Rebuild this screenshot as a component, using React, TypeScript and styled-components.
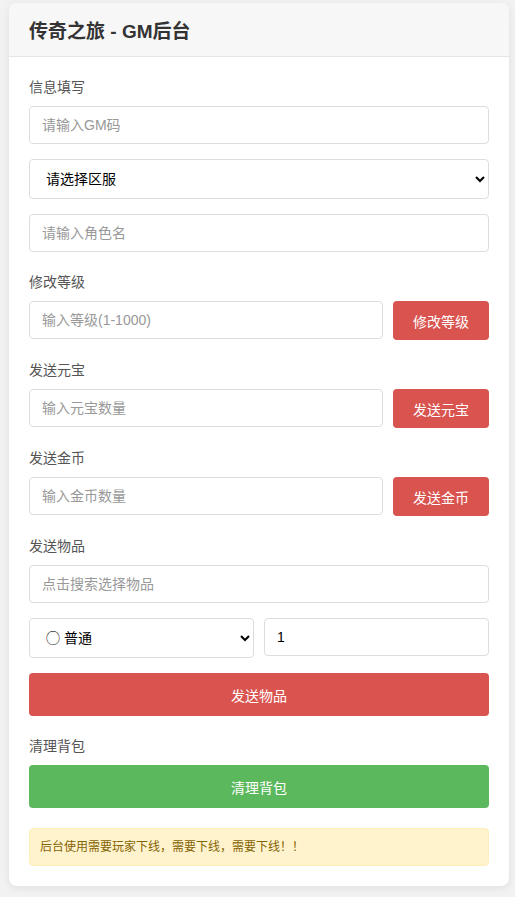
import React, { useState } from 'react'
import styled, { createGlobalStyle } from 'styled-components'

const GlobalStyle = createGlobalStyle`
  html, body {
    margin: 0;
    padding: 0;
    background: #f2f2f2;
    font-family: "Liberation Sans", "Noto Sans CJK SC", sans-serif;
  }
  * { box-sizing: border-box; }
`

const App = () => {
  const [gmCode, setGmCode] = useState('')
  const [server, setServer] = useState('')
  const [role, setRole] = useState('')
  const [level, setLevel] = useState('')
  const [ingot, setIngot] = useState('')
  const [gold, setGold] = useState('')
  const [item, setItem] = useState('')
  const [quality, setQuality] = useState('normal')
  const [count, setCount] = useState('1')

  return (
    <>
      <GlobalStyle />
      <Page>
        <Card>
          <CardHeader>
            <Title>传奇之旅 - GM后台</Title>
          </CardHeader>
          <CardBody>
            <Group>
              <Label>信息填写</Label>
              <Stack>
                <Input placeholder="请输入GM码" value={gmCode} onChange={(e: any) => setGmCode(e.target.value)} />
                <Select value={server} onChange={(e: any) => setServer(e.target.value)}>
                  <option value="">请选择区服</option>
                </Select>
                <Input placeholder="请输入角色名" value={role} onChange={(e: any) => setRole(e.target.value)} />
              </Stack>
            </Group>

            <Group>
              <Label>修改等级</Label>
              <ActionRow>
                <Input placeholder="输入等级(1-1000)" value={level} onChange={(e: any) => setLevel(e.target.value)} />
                <Button $tone="red">修改等级</Button>
              </ActionRow>
            </Group>

            <Group>
              <Label>发送元宝</Label>
              <ActionRow>
                <Input placeholder="输入元宝数量" value={ingot} onChange={(e: any) => setIngot(e.target.value)} />
                <Button $tone="red">发送元宝</Button>
              </ActionRow>
            </Group>

            <Group>
              <Label>发送金币</Label>
              <ActionRow>
                <Input placeholder="输入金币数量" value={gold} onChange={(e: any) => setGold(e.target.value)} />
                <Button $tone="red">发送金币</Button>
              </ActionRow>
            </Group>

            <Group>
              <Label>发送物品</Label>
              <Stack>
                <Input placeholder="点击搜索选择物品" value={item} onChange={(e: any) => setItem(e.target.value)} />
                <SplitRow>
                  <Select value={quality} onChange={(e: any) => setQuality(e.target.value)}>
                    <option value="normal">◯ 普通</option>
                  </Select>
                  <Input value={count} onChange={(e: any) => setCount(e.target.value)} />
                </SplitRow>
                <Button $tone="red" $block>发送物品</Button>
              </Stack>
            </Group>

            <Group>
              <Label>清理背包</Label>
              <Button $tone="green" $block>清理背包</Button>
            </Group>

            <Notice>后台使用需要玩家下线，需要下线，需要下线！！</Notice>
          </CardBody>
        </Card>
      </Page>
    </>
  )
}

let Page: any = styled.div`
  padding: 3px 6px 11px 9px;
`
let Card: any = styled.div`
  background: #ffffff;
  border-radius: 8px;
  box-shadow: 0 2px 8px rgba(0, 0, 0, 0.08);
  overflow: hidden;
`
let CardHeader: any = styled.div`
  background: #f7f7f7;
  border-bottom: 1px solid #e5e5e5;
  height: 54px;
  padding: 0 20px;
  display: flex;
  align-items: center;
`
let Title: any = styled.h1`
  margin: 0;
  font-size: 19px;
  font-weight: 700;
  color: #333;
`
let CardBody: any = styled.div`
  padding: 20px;
`
let Group: any = styled.div`
  margin-bottom: 20px;
`
let Label: any = styled.div`
  height: 20px;
  line-height: 20px;
  font-size: 14px;
  color: #555;
  margin-bottom: 9px;
`
let Stack: any = styled.div`
  display: flex;
  flex-direction: column;
  gap: 15px;
`
let Input: any = styled.input`
  display: block;
  min-width: 0;
  width: 100%;
  height: 38px;
  padding: 0 12px;
  border: 1px solid #dddddd;
  border-radius: 4px;
  font-size: 14px;
  font-family: inherit;
  color: #000;
  outline: none;
  &::placeholder { color: #999; }
`
let ActionRow: any = styled.div`
  display: flex;
  align-items: flex-start;
  gap: 10px;
  & > ${Input} { flex: 1; }
`
let SplitRow: any = styled.div`
  display: grid;
  grid-template-columns: 1fr 1fr;
  gap: 10px;
  align-items: start;
`
let Select: any = styled.select`
  display: block;
  width: 100%;
  height: 40px;
  padding: 0 12px;
  border: 1px solid #dddddd;
  border-radius: 4px;
  background: #fff;
  font-size: 14px;
  font-family: inherit;
  color: #000;
  outline: none;
`
let Button: any = styled.button<{ $tone: string; $block?: boolean }>`
  display: block;
  flex: none;
  width: ${(p) => (p.$block ? '100%' : '96px')};
  height: ${(p) => (p.$block ? '43px' : '39px')};
  border: none;
  border-radius: 4px;
  background: ${(p) => (p.$tone === 'green' ? '#5cb85c' : '#d9534f')};
  color: #fff;
  font-size: 14px;
  font-family: inherit;
  cursor: pointer;
`
let Notice: any = styled.div`
  height: 38px;
  line-height: 36px;
  padding: 0 10px;
  background: #fff3cd;
  border: 1px solid #ffeeba;
  border-radius: 4px;
  color: #856404;
  font-size: 12px;
`

export default App
